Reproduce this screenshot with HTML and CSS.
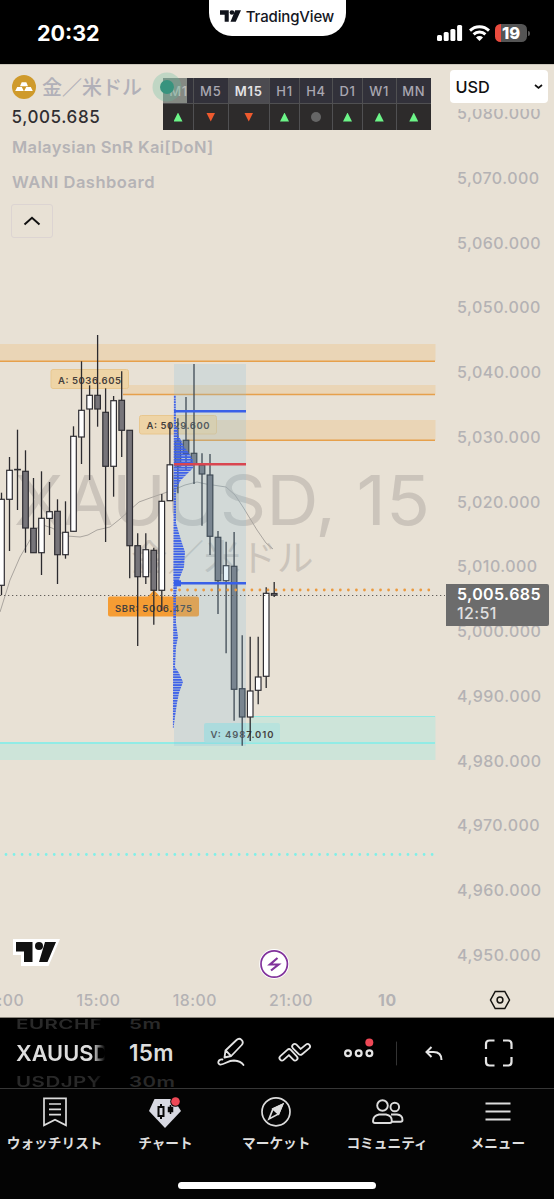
FILE: index.html
```html
<!DOCTYPE html>
<html lang="ja">
<head>
<meta charset="utf-8">
<title>TradingView</title>
<link rel="stylesheet" href="styles.css">
</head>
<body>
<header class="status">
  <div class="clock">20:32</div>
  <div class="pill">
    <svg width="21" height="12" viewBox="0 0 36 20"><path fill="#10131c" d="M0 0h15v20H8V8H0zM26 0h10l-9 20H18z"/><circle cx="20.5" cy="4" r="4" fill="#10131c"/></svg>
    <span>TradingView</span>
  </div>
  <div class="indicators">
    <svg width="26" height="16" viewBox="0 0 26 16" fill="#fff"><rect x="0" y="10" width="5" height="6" rx="1.5"/><rect x="6.7" y="7" width="5" height="9" rx="1.5"/><rect x="13.4" y="4" width="5" height="12" rx="1.5"/><rect x="20.1" y="0" width="5" height="16" rx="1.5"/></svg>
    <svg width="21" height="16" viewBox="0 0 21 16" fill="none" stroke="#fff" stroke-width="2.9"><path d="M1 5.6a13.6 13.6 0 0 1 19 0M4.6 9.4a8.4 8.4 0 0 1 11.8 0"/><path fill="#fff" stroke="none" d="M10.5 16L7 12.4a5 5 0 0 1 7 0z"/></svg>
    <div class="battery"><span>19</span></div>
    <i class="battery-tip"></i>
  </div>
</header>

<main class="chart">
  <svg class="plot" width="445" height="925" viewBox="0 64 445 925">
    <defs>
      <pattern id="rows" width="40" height="2.62" y="0.4" patternUnits="userSpaceOnUse"><rect width="40" height="1.9" fill="#3f62e8"/></pattern>
    </defs>
    <g class="watermark">
      <text x="14" y="524.5" font-size="69" textLength="416" lengthAdjust="spacingAndGlyphs">XAUUSD, 15</text>
      <text class="cjk" x="131" y="571" font-size="36.5">金／米ドル</text>
    </g>
    <g class="supply">
      <path class="fill" d="M0 344h435.500v17H0zM123 385h312.500v9.500H123zM187 420h248.500v20H187z"/>
      <path class="line" d="M0 361.200h435M123 394.600h312M187 440.200h248"/>
    </g>
    <g class="demand">
      <path class="fill" d="M0 742.500h435.500v17.500H0zM250 716h185.500v26.500H250z"/>
      <path class="line" d="M0 743h435"/><path class="line thin" d="M250 716.500h185"/>
    </g>
    <path class="average" d="M0 612L10 580 20 557 30 540 40 524 52 528 67 536 80 537 88 535 97 530 110 527 120 519 130 510 139 502 150 498 173 490 185 485 197 482 206 484 226 487 235 495 243 507 257 530 266 543 273 549"/>
    <g class="tags">
      <rect x="51" y="369.500" width="77.500" height="19" rx="2" fill="#eed4a6" stroke="#e8c78f"/>
      <rect x="139.500" y="415.500" width="77" height="18.500" rx="2" fill="#eed4a6" stroke="#e8c78f"/>
      <path d="M148 596.500l6-6.500 6 6.500h37a2 2 0 0 1 2 2v16a2 2 0 0 1-2 2h-87a2 2 0 0 1-2-2v-16a2 2 0 0 1 2-2z" fill="#f59c33"/>
      <rect x="204" y="723" width="76" height="19.500" rx="2" fill="#b8e3dd"/>
      <text x="58" y="383.700" textLength="63">A: 5036.605</text>
      <text x="146.500" y="428.700" textLength="63">A: 5029.600</text>
      <text x="115" y="611.500" textLength="77">SBR: 5006.475</text>
      <text x="210.500" y="737.500" textLength="63">V: 4987.010</text>
    </g>
    <g id="candles"></g>
    <rect x="174" y="364" width="72" height="382" fill="rgba(130,190,225,.22)"/>
    <path fill="url(#rows)" d="M173.900 395h1.800l.3 32 1.500 1 1 8 2.500 4 3 7 5 6 4 7v8l-5 5-7 7-4 7-1 6v30l2 7 3 10 4 12-1 15-4 10-3 10-1 8v28l2 14-2 10-1 20 4 6 4 9-4 11-2 10-2 14-1.500 11h-.6z"/>
    <g class="levels">
      <path d="M174 411.300h72M174 583.300h72"/><path d="M174 583.300h7" stroke-width="6"/>
      <path d="M174 464.200h72" stroke="#d94650"/>
    </g>
    <path class="dots orange" d="M171.500 590h262"/>
    <path class="dots cyan" d="M6 854.500h428"/>
    <path class="last" d="M0 595.500h445"/>
    <g class="bolt"><circle cx="274.200" cy="964" r="15" fill="#fff"/><circle cx="274.200" cy="964" r="13.200"/><path class="spark" d="M277.500 958l-7.500 6.500h8.500l-7.500 6"/></g>
    <path d="M13 939h47l-11.500 27H21v-11h-8z" fill="#fff"/>
    <path d="M16 942h16.500v20H24v-10.500h-8zM45 942h11l-8.500 20H39z" fill="#111"/><circle cx="39" cy="946" r="4" fill="#111"/>
  </svg>

  <div class="prices">
    <span>5,080.000</span><span>5,070.000</span><span>5,060.000</span><span>5,050.000</span><span>5,040.000</span><span>5,030.000</span><span>5,020.000</span><span>5,010.000</span><span>5,000.000</span><span>4,990.000</span><span>4,980.000</span><span>4,970.000</span><span>4,960.000</span><span>4,950.000</span>
  </div>

  <div class="times"><span>12:00</span><span>15:00</span><span>18:00</span><span>21:00</span><b>10</b></div>
  <svg class="hex" width="22" height="20" viewBox="0 0 22 20" fill="none" stroke="#15130f" stroke-width="1.500"><path d="M6.200 1.500h9.600L20.500 10l-4.700 8.500H6.200L1.500 10z"/><circle cx="11" cy="10" r="2.900"/></svg>

  <section class="legend">
    <div class="symbol">
      <svg width="24" height="24" viewBox="0 0 24 24"><circle cx="12" cy="12" r="12" fill="#cf9a2b"/><path fill="#fff" d="M9.700 7.200h4.600l1.700 4H8zM5.200 12h4.600l2 4H3.200zM14.200 12h4.600l2 4h-8.600z"/></svg>
      <span>金／米ドル</span>
    </div>
    <div class="quote">5,005.685</div>
    <div class="study kai">Malaysian SnR Kai[DoN]</div>
    <div class="study wani">WANI Dashboard</div>
    <div class="collapse"><svg width="18" height="10" viewBox="0 0 18 10" fill="none" stroke="#111" stroke-width="2"><path d="M1.500 8.500L9 1.800l7.500 6.700"/></svg></div>
  </section>

  <div class="frames">
    <b class="first">M1</b><b>M5</b><b class="active">M15</b><b>H1</b><b>H4</b><b>D1</b><b>W1</b><b>MN</b>
    <i class="up"></i><i class="down"></i><i class="down"></i><i class="up"></i><i class="flat"></i><i class="up"></i><i class="up"></i><i class="up"></i>
  </div>
  <svg class="market" width="32" height="30" viewBox="0 0 32 30"><circle cx="15" cy="15" r="14.500" fill="rgba(100,190,160,.3)"/><circle cx="15" cy="15" r="7" fill="#37937e"/></svg>

  <div class="currency"><span>USD</span><svg width="9" height="6" viewBox="0 0 9 6" fill="none" stroke="#111" stroke-width="1.700"><path d="M1 1l3.500 3L8 1"/></svg></div>
  <div class="tag"><strong>5,005.685</strong><span>12:51</span></div>
</main>

<section class="toolbar">
  <div class="wheel pair"><span class="dim top">EURCHF</span><span class="now">XAUUSD</span><span class="dim bottom">USDJPY</span></div>
  <div class="wheel period"><span class="dim top">5m</span><span class="now">15m</span><span class="dim bottom">30m</span></div>
  <svg class="tools" width="374" height="70" viewBox="180 1018 374 70" fill="none" stroke="#e4e4e4" stroke-width="1.800" stroke-linejoin="round" stroke-linecap="round">
    <path d="M224.500 1057.500l1-7 11-10.500q2.500-2.500 5-.2t.2 5.200l-10.500 11zM225.700 1050.500l5.300 5.300M222.500 1059.500c-4.500-.5-5.500 4.500-2.500 5 5 .5 7-4 14-4q7 .5 9.500 4.500"/>
    <g class="ribbon"><path d="M294.700 1046.500l5.800 5.800 7-5.800"/><path class="core" d="M294.700 1046.500l5.800 5.800 7-5.800"/><path d="M282 1058l7-6.300 6 6.300"/><path class="core" d="M282 1058l7-6.300 6 6.300"/></g>
    <g stroke-width="2.200"><circle cx="348" cy="1053.300" r="2.900"/><circle cx="358.700" cy="1053.300" r="2.900"/><circle cx="369.400" cy="1053.300" r="2.900"/></g>
    <circle cx="369.300" cy="1042.500" r="4" fill="#ee4856" stroke="none"/>
    <path stroke="#333" stroke-width="1" d="M396.500 1042v23"/>
    <path stroke-width="2" stroke-linecap="butt" stroke-linejoin="miter" d="M431.500 1047l-5 5 5 5M426.500 1052h7q8 0 8 8"/>
    <path stroke-width="2.200" stroke-linecap="butt" d="M486 1049v-5q0-3.500 3.500-3.500h5M503 1040.500h5q3.500 0 3.500 3.500v5M511.500 1057v5q0 3.500-3.500 3.500h-5M494.500 1065.500h-5q-3.500 0-3.500-3.500v-5"/>
  </svg>
</section>

<nav class="tabs">
  <div class="tab"><svg width="32" height="32" viewBox="0 0 32 32" fill="none" stroke="#dcdcdc" stroke-width="1.700"><path d="M5 2.300h22v27l-11-5.500-11 5.500zM10 8h12M10 13.300h12M10 18.600h12"/></svg><span>ウォッチリスト</span></div>
  <div class="tab"><svg width="34" height="32" viewBox="0 0 34 32"><path fill="#d8d9e2" d="M6.500 3h19l7.500 12-16 17L1 15z"/><g fill="none" stroke="#080808" stroke-width="2"><path d="M10.500 11h5v9h-5zM13 8v3M13 20v3"/><path fill="#080808" stroke-width="1.500" d="M20.500 11.500h4v4h-4zM22.500 9v9"/></g><circle cx="27.500" cy="5.500" r="5.300" fill="#050505"/><circle cx="27.500" cy="5.500" r="4.300" fill="#ee4856"/></svg><span>チャート</span></div>
  <div class="tab"><svg width="32" height="32" viewBox="0 0 32 32" fill="none" stroke="#dcdcdc" stroke-width="1.700"><circle cx="16" cy="15.800" r="14"/><path d="M22.500 8.500L13 13l-4 10 9.500-5z"/><path fill="#dcdcdc" d="M22.500 8.500L13 13l5.500 5z"/></svg><span>マーケット</span></div>
  <div class="tab"><svg width="34" height="32" viewBox="0 0 34 32" fill="none" stroke="#dcdcdc" stroke-width="1.900"><circle cx="12.500" cy="9.500" r="5.300"/><circle cx="24.800" cy="11" r="4.300"/><path d="M9 18.500h7q6 1 5.800 6.500 0 2-2 2H5q-2 0-2-2 .3-5.500 6-6.500zM21 18.500h6q5.500.500 5.500 5.500 0 1.700-2 1.700h-8.500"/></svg><span>コミュニティ</span></div>
  <div class="tab"><svg width="32" height="32" viewBox="0 0 32 32" stroke="#dcdcdc" stroke-width="2"><path d="M3.500 7.500h25M3.500 15.500h25M3.500 23.500h25"/></svg><span>メニュー</span></div>
  <div class="home"></div>
</nav>
<script src="chart.js"></script>
</body>
</html>
```

FILE: styles.css
```css
* { box-sizing: border-box; }
body { margin: 0; width: 554px; height: 1199px; overflow: hidden; display: flex; flex-direction: column; background: #000; font-family: Inter, "Noto Sans CJK JP", sans-serif; }
svg { display: block; flex: none; }

.status { height: 64px; flex: none; display: grid; grid-template-columns: 209px 137px 1fr; color: #fff; }
.clock { padding: 21px 0 0 37px; font-size: 21.500px; line-height: 25px; font-weight: 700; }
.pill { height: 36px; background: #fff; color: #15171f; border-radius: 0 0 23px 23px; display: flex; justify-content: center; align-items: center; gap: 5px; padding: 0 1px 4px 0; font-size: 15px; font-weight: 500; letter-spacing: -.15px; }
.indicators { display: flex; align-items: flex-start; padding: 25px 0 0 91px; gap: 5.500px; }
.battery { width: 32px; height: 18px; margin-top: -1px; border-radius: 5.500px; background: linear-gradient(90deg, #ea4b3e 6px, #555 6px); text-align: center; font-size: 16.500px; line-height: 18px; font-weight: 800; }
.battery-tip { width: 2px; height: 5px; margin: 5.500px 0 0 -4.500px; border-radius: 0 2px 2px 0; background: #555; }

.chart { position: relative; height: 954px; flex: none; display: grid; grid-template: 925px 29px / 445px 109px; background: #e8e1d5; border-bottom: 1px solid #8b867c; overflow: hidden; box-shadow: inset 0 1px #cbc6ba; }
.watermark { fill: #cbc4bb; font-family: Inter, sans-serif; }
.watermark .cjk { font-family: "Noto Sans CJK JP", sans-serif; font-weight: 400; }
.supply .fill { fill: #ead5b6; }
.supply .line { stroke: #e6a04b; stroke-width: 1.5; }
.demand .fill { fill: #cde4d9; }
.demand .line { stroke: #91ebe5; stroke-width: 2; }
.demand .thin { stroke-width: 1.2; }
.average { fill: none; stroke: #aaa59f; stroke-width: 1; }
.tags text { font: 600 9.500px Inter, sans-serif; fill: #46413d; }
.candle-up, .candle-down { stroke: #2f2e33; stroke-width: 1.2; }
.candle-up { fill: #fff; }
.candle-down { fill: #77757a; }
.wick { stroke: #2b2a2e; stroke-width: 1.3; }
.levels { stroke: #3960e8; stroke-width: 2.4; }
.dots { fill: none; stroke-width: 2.8; stroke-linecap: round; stroke-dasharray: 0 8.040; }
.orange { stroke: #eb9a40; }
.cyan { stroke: #80f0e8; }
.last { stroke: #635f5b; stroke-width: 1; stroke-dasharray: 1.3 2.7; }
.bolt { fill: none; stroke: #81329b; stroke-width: 1.7; }
.bolt circle:first-child { stroke: none; }
.spark { stroke-width: 2.2; stroke-linejoin: miter; }

.prices { display: flex; flex-direction: column; padding: 17px 0 0 12px; color: #b4b2b4; font-size: 16px; font-weight: 500; letter-spacing: .5px; }
.prices span { height: 64.780px; flex: none; line-height: 64px; white-space: nowrap; }
.times { display: flex; color: #b4b2b4; font-size: 15.800px; line-height: 24px; font-weight: 500; letter-spacing: .5px; margin-left: -46px; width: 480px; }
.times span, .times b { width: 96.300px; text-align: center; flex: none; }
.hex { margin: 1px 0 0 44px; }

.legend { position: absolute; left: 11px; top: 10px; color: #b5b3b6; font-weight: 600; }
.symbol { display: flex; gap: 6px; align-items: center; height: 26px; font: 500 20px/26px "Noto Sans CJK JP", sans-serif; color: #b1b0b8; }
.symbol svg { margin-left: 1px; }
.quote { color: #302e31; font-size: 17px; line-height: 34px; font-weight: 500; letter-spacing: .6px; margin-left: .5px; }
.study { font-size: 16.500px; line-height: 35px; white-space: nowrap; letter-spacing: .37px; }
.kai { margin: -4px 0 0 1px; }
.wani { margin-left: 1px; letter-spacing: .5px; }
.collapse { width: 42px; height: 34px; margin-top: 3.500px; display: grid; place-items: center; border: 1px solid #dcd4d2; border-radius: 3px; }

.frames { position: absolute; left: 163px; top: 14px; width: 268px; height: 52px; display: grid; grid-template: 26px 26px / 31px 34.500px 41.500px 30px 33px 30px 33.500px 34.500px; background: #2d2b2b; }
.frames b, .frames i { border-right: 1px solid #505052; display: grid; place-items: center; }
.frames b:nth-child(8), .frames i:last-child { border-right: 0; }
.frames b { background: #32313a; border-bottom: 1px solid #505052; color: #a9a7b1; font-size: 13px; font-weight: 500; letter-spacing: .7px; }
.frames .first { background: linear-gradient(90deg, #858983 24px, #32313a 24px); color: #bbbcb9; padding-left: 1px; }
.frames .active { background: #4c4b50; color: #e4e3e5; font-weight: 600; }
.frames i::before { content: ""; width: 9px; height: 9px; }
.frames .up::before { background: #6cf588; clip-path: polygon(50% 0, 100% 100%, 0 100%); }
.frames .down::before { background: #ee5a2e; clip-path: polygon(0 0, 100% 0, 50% 100%); }
.frames .flat::before { width: 10px; height: 10px; background: #666; border-radius: 50%; }
.market { position: absolute; left: 152px; top: 8px; }

.currency { position: absolute; left: 445px; top: 0; width: 109px; height: 45px; display: flex; align-items: center; justify-content: space-between; padding: 1px 11px 0 10.500px; font-size: 16.300px; font-weight: 500; background: #e8e1d5; color: #111; isolation: isolate; box-shadow: inset 0 1px #cbc6ba; }
.currency::before { content: ""; position: absolute; z-index: -1; left: 5px; top: 6px; width: 98px; height: 33px; background: #fff; border-radius: 4px; }
.tag { position: absolute; left: 445.500px; top: 520px; width: 103px; height: 41.500px; padding: 1px 0 0 11.500px; border-radius: 0 2px 2px 0; background: #6c6c6c; color: #fff; font-size: 16px; line-height: 19px; letter-spacing: .4px; display: flex; flex-direction: column; }
.tag strong { font-weight: 600; }
.tag span { color: #e0e0e0; font-weight: 500; }

.toolbar { height: 70px; flex: none; display: grid; grid-template-columns: 120px 60px 374px; }
.wheel { display: grid; grid-template-rows: 16px 38px 16px; overflow: hidden; font-size: 20.500px; font-weight: 600; color: #ddd; white-space: nowrap; }
.pair { width: 90px; margin-left: 16px; -webkit-mask: linear-gradient(90deg, #000 85%, transparent 99%); mask: linear-gradient(90deg, #000 85%, transparent 99%); }
.period { padding-left: 9px; }
.now { line-height: 38px; font-size: 21.800px; }
.period .now { font-size: 22.500px; letter-spacing: .3px; }
.dim { color: #292929; line-height: 16px; letter-spacing: .5px; }
.top { transform: translateY(-2px) scaleY(.65); }
.bottom { transform: translateY(2px) scaleY(.7); }
.ribbon { stroke-width: 6.8; }
.ribbon .core { stroke: #000; stroke-width: 3.2; }

.tabs { height: 111px; flex: none; display: grid; grid-template: 93px 18px / repeat(5, 1fr); border-top: 1px solid #363636; background: #040404; }
.tab { display: flex; flex-direction: column; align-items: center; padding: 6.500px 1.500px 0 0; color: #dedede; font: 700 13.700px/22px "Noto Sans CJK JP", sans-serif; white-space: nowrap; }
.tab span { margin-top: 3px; }
.home { grid-column: 1 / -1; justify-self: center; width: 198px; height: 7px; border-radius: 4px; background: #fff; }
```

FILE: chart.js
```js
// [x, high, low, body top, body bottom, rising]
const candles = [
  [1.5, 492.7, 595, 499.3, 585.3, 1], [9.5, 457, 551, 470.3, 499.3, 1],
  [17.5, 429.7, 510, 469.4, 469.8, 1], [25.5, 450.3, 552.7, 471.3, 528, 0],
  [33.5, 478, 552.7, 528.3, 552.7, 0], [41.5, 471.3, 575, 518.3, 552.7, 1],
  [49.5, 482, 535, 511.7, 518.4, 1], [57.5, 499.3, 584, 511.3, 554.7, 0],
  [65.5, 501.3, 558.7, 532.3, 554.7, 1], [73.5, 426.3, 531.5, 436.3, 531.3, 1],
  [81.5, 361.3, 464, 410.3, 437, 1], [89.6, 385.3, 480, 395.3, 409, 1],
  [97.6, 335, 426.7, 395.3, 409, 0], [105.6, 388.3, 542, 412.3, 466.3, 0],
  [113.6, 396, 496.7, 400.7, 466.3, 1], [121.7, 371.3, 457, 400.3, 430.3, 0],
  [129.7, 430, 578.3, 430.3, 545.7, 0], [137.7, 533.3, 646, 545.7, 576.7, 0],
  [145.8, 533.3, 584, 549.7, 576.7, 1], [153.8, 547.7, 624.7, 550.3, 590.3, 0],
  [161.8, 494, 611, 501.3, 590.3, 1], [169.9, 423.3, 500.7, 464.8, 500.7, 1],
  [177.9, 418.3, 493.3, 441, 466, 0], [186, 397, 470, 440.3, 453.7, 0],
  [194, 364, 484, 453.3, 464, 0], [202, 453.3, 525.7, 465, 474, 0],
  [210, 454, 555, 475, 536.3, 0], [218, 531, 614, 537.3, 580.7, 0],
  [226.1, 541.7, 653.3, 565.7, 580.7, 1], [234.1, 532, 720.7, 566.3, 689.3, 0],
  [242.2, 635.3, 745.7, 688.7, 717, 0], [250.2, 636.7, 741, 691, 717, 1],
  [258.2, 636.7, 704.3, 677, 690.3, 1], [266.2, 587.3, 688, 593.3, 676.3, 1],
  [274.2, 582, 597, 593.5, 595.3, 0]
];

document.getElementById("candles").innerHTML = candles.map(([x, high, low, top, bottom, up]) =>
  `<line class="wick" x1="${x}" x2="${x}" y1="${high}" y2="${low}"/>` +
  `<rect class="${up ? "candle-up" : "candle-down"}" x="${x - 2.8}" y="${top}" width="5.6" height="${bottom - top}"/>`
).join("");
```
